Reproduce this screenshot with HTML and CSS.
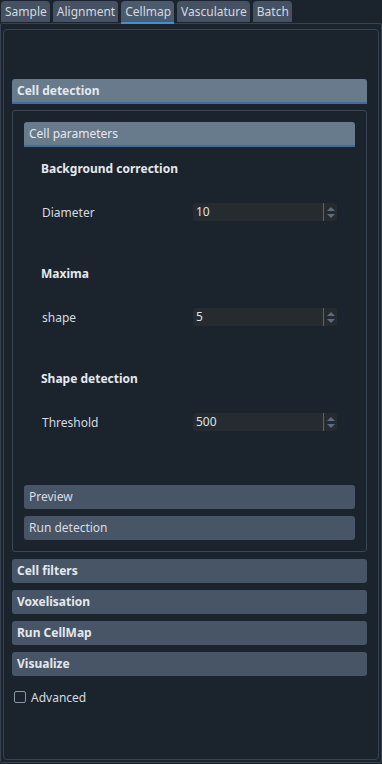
FILE: index.html
```html
<!DOCTYPE html>
<html lang="en">
<head>
    <meta charset="UTF-8">
    <meta name="viewport" content="width=device-width, initial-scale=1.0">
    <title>Cellmap</title>
    <link rel="stylesheet" href="styles.css">
</head>
<body>
    <nav class="tabbar">
        <div class="tab">Sample</div>
        <div class="tab">Alignment</div>
        <div class="tab active">Cellmap</div>
        <div class="tab">Vasculature</div>
        <div class="tab">Batch</div>
    </nav>

    <div class="pane">
        <div class="pane-inner">
            <section class="group">
                <div class="group-title open">Cell detection</div>
                <div class="group-body">
                    <div class="sub-title">Cell parameters</div>
                    <div class="params">
                        <div class="param-heading">Background correction</div>
                        <div class="param-row">
                            <span class="param-label">Diameter</span>
                            <div class="spinbox">
                                <span class="spin-value">10</span>
                                <span class="spin-arrows"><i class="up"></i><i class="down"></i></span>
                            </div>
                        </div>

                        <div class="param-heading">Maxima</div>
                        <div class="param-row">
                            <span class="param-label">shape</span>
                            <div class="spinbox">
                                <span class="spin-value">5</span>
                                <span class="spin-arrows"><i class="up"></i><i class="down"></i></span>
                            </div>
                        </div>

                        <div class="param-heading">Shape detection</div>
                        <div class="param-row last">
                            <span class="param-label">Threshold</span>
                            <div class="spinbox">
                                <span class="spin-value">500</span>
                                <span class="spin-arrows"><i class="up"></i><i class="down"></i></span>
                            </div>
                        </div>
                    </div>
                    <div class="button">Preview</div>
                    <div class="button">Run detection</div>
                </div>
            </section>

            <div class="group-title">Cell filters</div>
            <div class="group-title">Voxelisation</div>
            <div class="group-title">Run CellMap</div>
            <div class="group-title">Visualize</div>

            <label class="check">
                <span class="check-box"></span>
                Advanced
            </label>
        </div>
    </div>
</body>
</html>
```

FILE: styles.css
```css
body {
    font-family: 'Noto Sans', 'Open Sans', sans-serif;
    font-size: 12px;
    margin: 0;
    padding: 0;
    background-color: #1b232d;
    color: #d6dbe0;
    width: 382px;
    height: 764px;
    overflow: hidden;
}
.tabbar {
    display: flex;
    align-items: flex-start;
    gap: 3px;
    height: 23px;
    padding: 1px 0 0 1px;
    box-sizing: border-box;
}
.tab {
    height: 21px;
    line-height: 21px;
    padding: 0 3px 0 4px;
    background-color: #465264;
    border-radius: 4px 4px 0 0;
    color: #d4d9df;
    font-size: 12px;
}
.tab.active {
    background-color: #4c5a6d;
    border-bottom: 2px solid #3d8fd6;
}
.pane {
    height: 740px;
    box-sizing: border-box;
    border: 1px solid #374352;
    border-radius: 2px;
    padding: 5px 2px 2px 2px;
}
.pane-inner {
    height: 100%;
    box-sizing: border-box;
    border: 1px solid #374352;
    border-radius: 4px;
    padding: 49px 11px 0 8px;
}
.group-title {
    height: 24px;
    line-height: 24px;
    padding-left: 5px;
    background-color: #485567;
    border-radius: 3px;
    font-weight: bold;
    color: #e4e8ec;
    margin-top: 7px;
}
.group .group-title {
    margin-top: 0;
}
.group-title.open {
    height: 23px;
    line-height: 24px;
    background-color: #687b8c;
    border-bottom: 2px solid #3a6fa0;
    border-radius: 3px 3px 0 0;
}
.group-body {
    margin-top: 6px;
    border: 1px solid #3a4655;
    border-radius: 3px;
    padding: 11px 11px 11px 11px;
}
.sub-title {
    height: 23px;
    line-height: 24px;
    padding-left: 5px;
    background-color: #687b8c;
    border-bottom: 2px solid #3a6fa0;
    border-radius: 3px 3px 0 0;
    color: #e4e8ec;
}
.params {
    padding: 14px 18px 0 17px;
}
.param-heading {
    height: 16px;
    line-height: 16px;
    font-weight: bold;
    color: #e4e8ec;
    margin-bottom: 26px;
}
.param-row {
    display: flex;
    align-items: center;
    height: 18px;
    margin-bottom: 45px;
}
.param-row.last {
    margin-bottom: 54px;
}
.param-label {
    flex: 1;
    padding-left: 1px;
}
.spinbox {
    width: 144px;
    height: 18px;
    display: flex;
    background-color: #262b30;
    border-radius: 3px;
}
.spin-value {
    flex: 1;
    line-height: 18px;
    padding-left: 3px;
    color: #dfe3e6;
}
.spin-arrows {
    width: 13px;
    border-left: 1px solid #56657a;
    display: flex;
    flex-direction: column;
    align-items: center;
    justify-content: center;
    gap: 3px;
}
.spin-arrows i {
    width: 0;
    height: 0;
    border-left: 4px solid transparent;
    border-right: 4px solid transparent;
}
.spin-arrows .up {
    border-bottom: 4px solid #5d6c80;
}
.spin-arrows .down {
    border-top: 4px solid #5d6c80;
}
.button {
    height: 24px;
    line-height: 24px;
    padding-left: 5px;
    background-color: #485567;
    border-radius: 3px;
    color: #d8dde2;
    margin-top: 7px;
}
.check {
    display: flex;
    align-items: center;
    gap: 5px;
    margin-top: 13px;
    margin-left: 2px;
    height: 16px;
}
.check-box {
    width: 10px;
    height: 10px;
    border: 1px solid #8b96a3;
    border-radius: 2px;
}
```
